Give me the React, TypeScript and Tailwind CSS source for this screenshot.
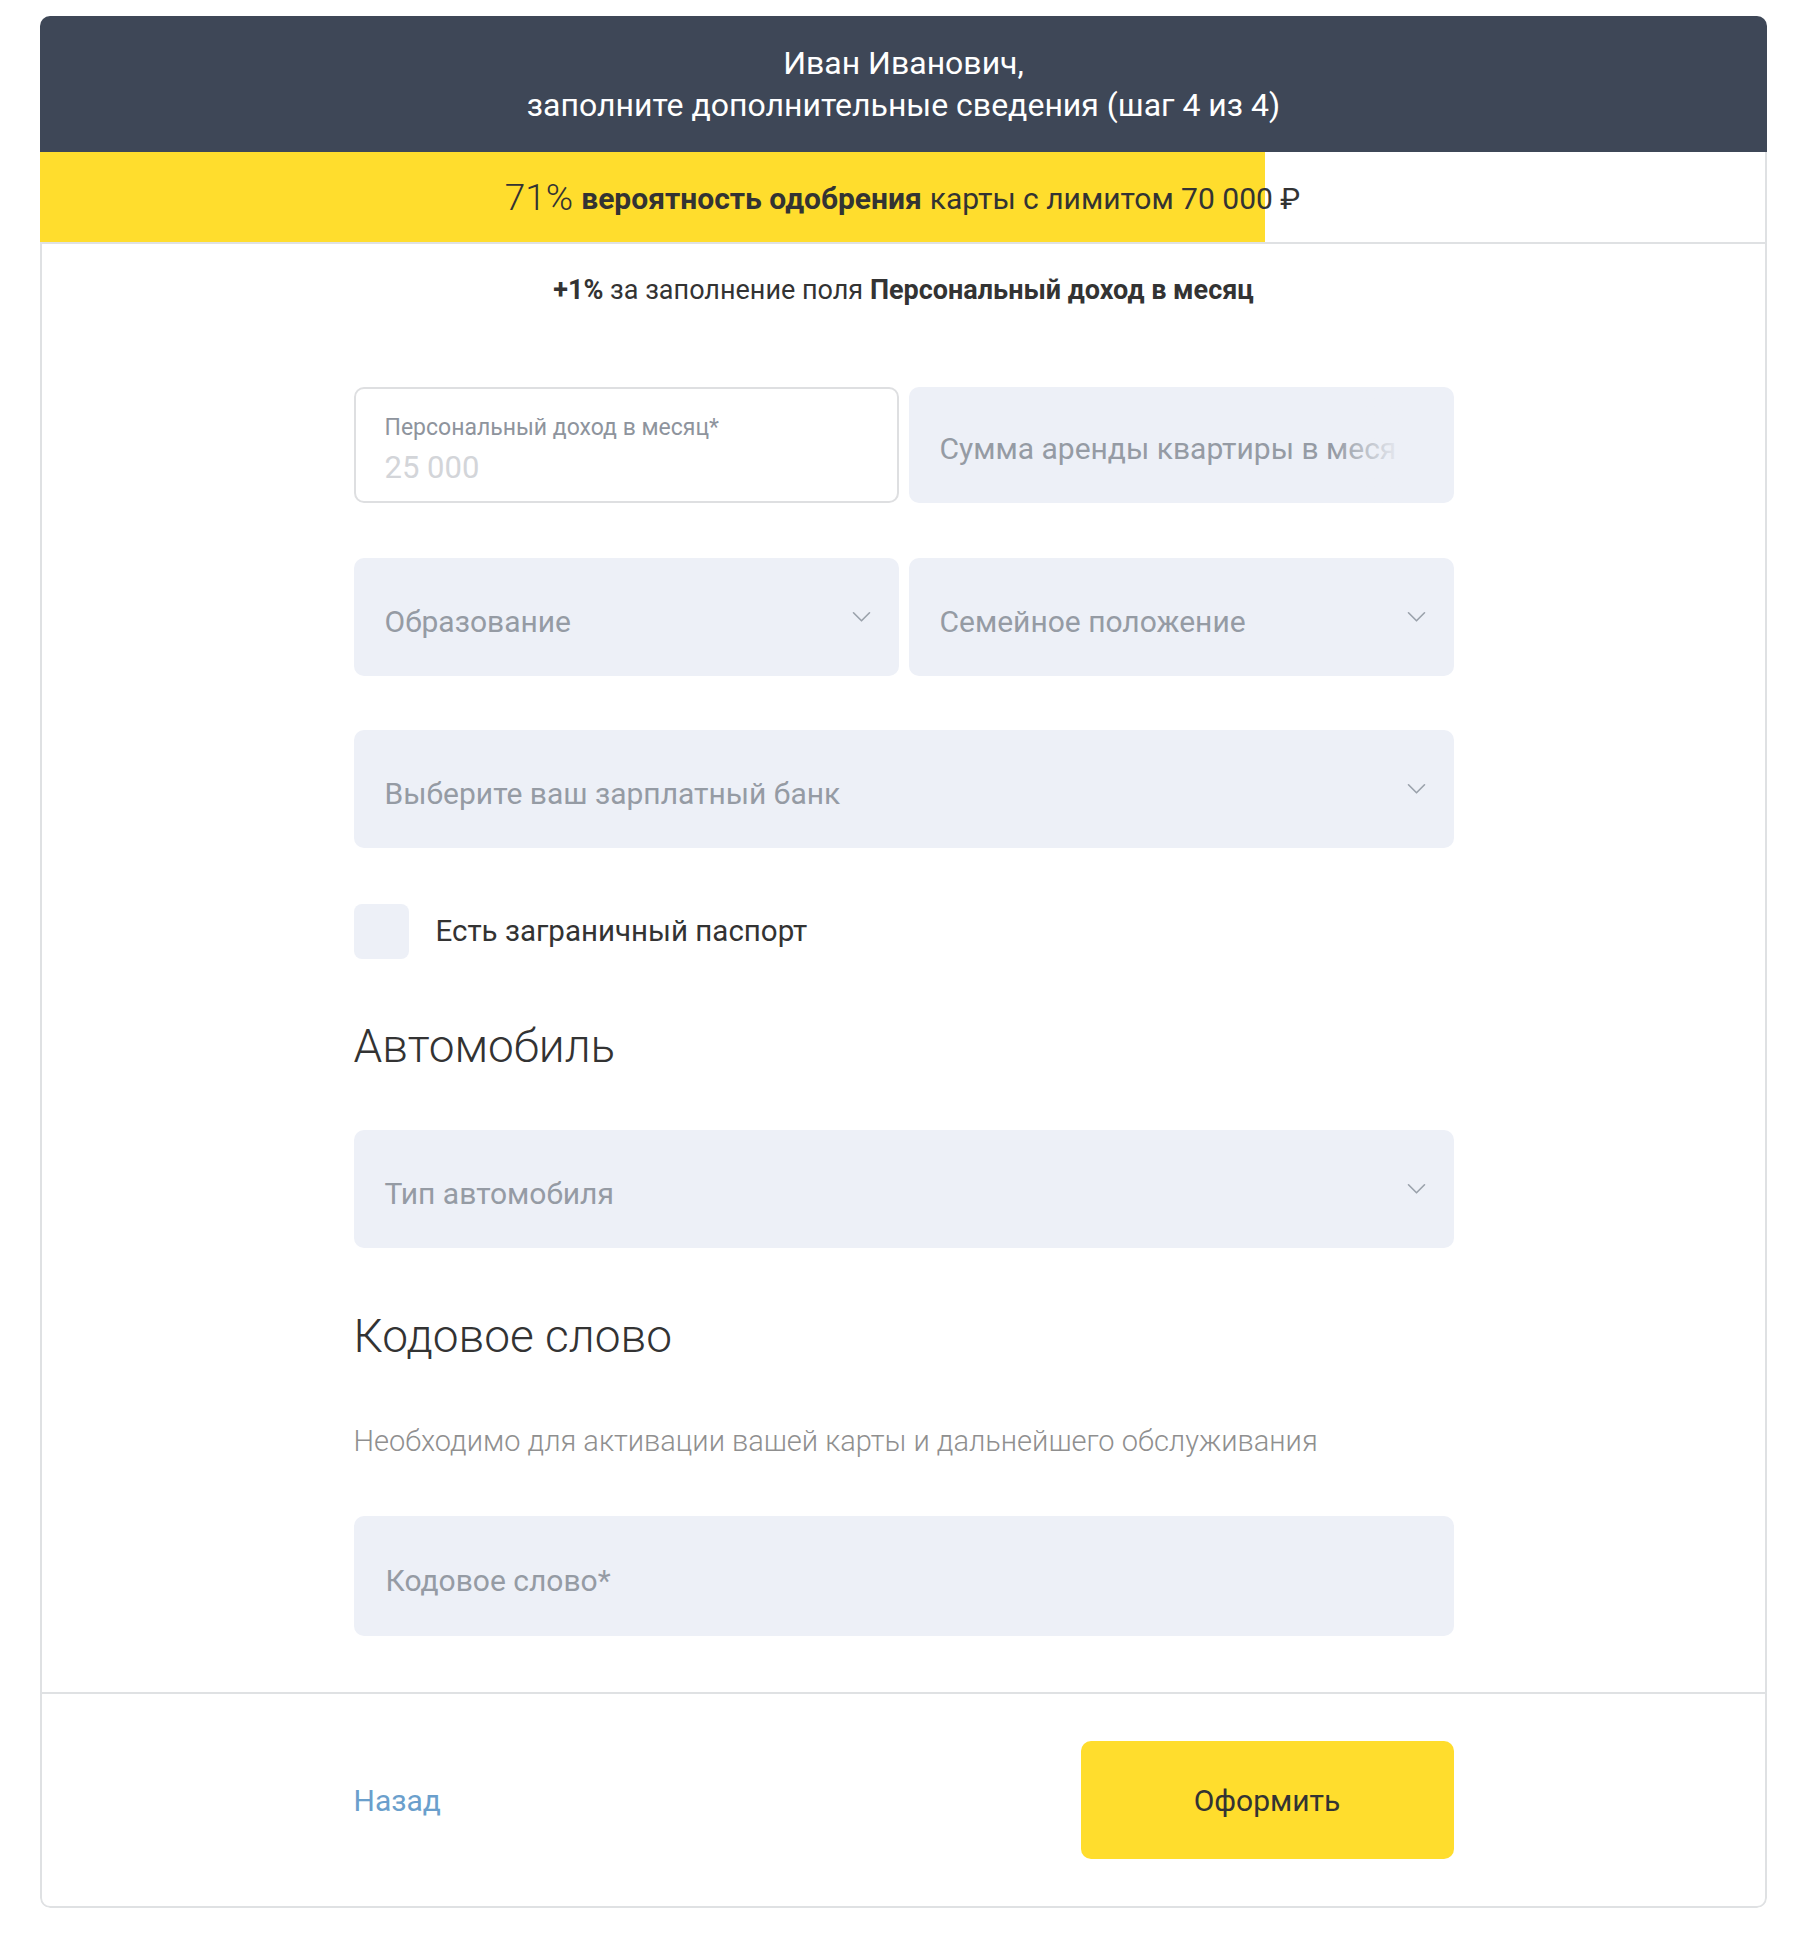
import type { ReactNode } from "react";

function Chevron() {
  return (
    <svg width="19" height="12" viewBox="0 0 19 12" fill="none" className="shrink-0">
      <path d="M1.5 1.8l8 8 8-8" stroke="#9aa1ab" strokeWidth="1.6" strokeLinecap="round" strokeLinejoin="round" />
    </svg>
  );
}

function Select({ label, className = "" }: { label: string; className?: string }) {
  return (
    <div className={`h-[118px] rounded-[10px] bg-[#edf0f7] pl-[31px] pr-[28px] flex items-center justify-between ${className}`}>
      <span className="pt-[9px] text-[30px] text-[#959ba4]">{label}</span>
      <Chevron />
    </div>
  );
}

function SectionTitle({ children }: { children: ReactNode }) {
  return <h2 className="text-[46px] font-light leading-[56px] text-[#333]">{children}</h2>;
}

export default function App() {
  return (
    <div className="min-h-screen bg-white font-[Roboto,'Liberation_Sans',sans-serif] pt-4 pl-10">
      <div className="w-[1727px] rounded-[10px] overflow-hidden">
        {/* Header */}
        <div className="h-[136px] bg-[#3e4757] flex flex-col items-center justify-center text-white text-[32px] leading-[42px]">
          <div>Иван Иванович,</div>
          <div>заполните дополнительные сведения (шаг 4 из 4)</div>
        </div>

        {/* Approval probability */}
        <div className="relative h-[92px] border-b-2 border-r-2 border-[#dfe1e3] bg-white">
          <div className="absolute left-0 top-0 bottom-0 w-[71%] bg-[#ffdd2d]" />
          <div className="relative h-full flex items-center justify-center text-[30px] text-[#333] pt-[2px]">
            <span className="text-[37px] font-light mr-[8px]">71%</span>
            <span className="font-bold mr-[8px]">вероятность одобрения</span>
            <span>карты с лимитом 70 000 ₽</span>
          </div>
        </div>

        <div className="border-x-2 border-b-2 border-[#dfe1e3] rounded-b-[10px]">
          <div className="pt-[28px] text-center text-[27px] text-[#333] leading-[36px]">
            <b>+1%</b> за заполнение поля <b>Персональный доход в месяц</b>
          </div>

          <div className="w-[1100px] mx-auto pt-[79px] pb-[56px]">
            <div className="grid grid-cols-2 gap-[10px]">
              <div className="h-[116px] rounded-[10px] border-2 border-[#dedfe1] pl-[29px] pt-[12px] flex flex-col justify-center">
                <div className="text-[23px] text-[#8e949d] leading-[28px]">Персональный доход в месяц*</div>
                <div className="text-[31px] text-[#d3d5d9] leading-[40px] mt-[6px]">25 000</div>
              </div>
              <div className="relative h-[116px] rounded-[10px] bg-[#edf0f7] pl-[31px] pr-[56px] flex items-center overflow-hidden">
                <span className="pt-[6px] text-[30px] text-[#959ba4] whitespace-nowrap overflow-hidden">
                  Сумма аренды квартиры в месяц
                </span>
                <div className="absolute top-0 bottom-0 right-[50px] w-[70px] bg-gradient-to-r from-[#edf0f7]/0 to-[#edf0f7]" />
              </div>
            </div>

            <div className="grid grid-cols-2 gap-[10px] mt-[55px]">
              <Select label="Образование" />
              <Select label="Семейное положение" />
            </div>

            <Select label="Выберите ваш зарплатный банк" className="mt-[54px]" />

            <label className="mt-[56px] flex items-center gap-[27px]">
              <span className="w-[55px] h-[55px] rounded-[8px] bg-[#edf0f7]" />
              <span className="text-[29.5px] text-[#333]">Есть заграничный паспорт</span>
            </label>

            <div className="mt-[59px]">
              <SectionTitle>Автомобиль</SectionTitle>
            </div>
            <Select label="Тип автомобиля" className="mt-[56px]" />

            <div className="mt-[60px]">
              <SectionTitle>Кодовое слово</SectionTitle>
            </div>
            <p className="mt-[59px] text-[29px] font-light text-[#8f8f8f] leading-[36px]">
              Необходимо для активации вашей карты и дальнейшего обслуживания
            </p>
            <div className="mt-[57px] h-[120px] rounded-[10px] bg-[#edf0f7] pl-[32px] flex items-center">
              <span className="pt-[8px] text-[30px] text-[#959ba4]">Кодовое слово*</span>
            </div>
          </div>

          {/* Footer */}
          <div className="border-t-2 border-[#dfe1e3] h-[214px] flex items-center">
            <div className="w-[1100px] mx-auto flex items-center justify-between">
              <a className="text-[30px] text-[#6b9fcc]">Назад</a>
              <button className="w-[373px] h-[118px] rounded-[10px] bg-[#ffdd2d] text-[30px] text-[#333]">
                Оформить
              </button>
            </div>
          </div>
        </div>
      </div>
    </div>
  );
}
